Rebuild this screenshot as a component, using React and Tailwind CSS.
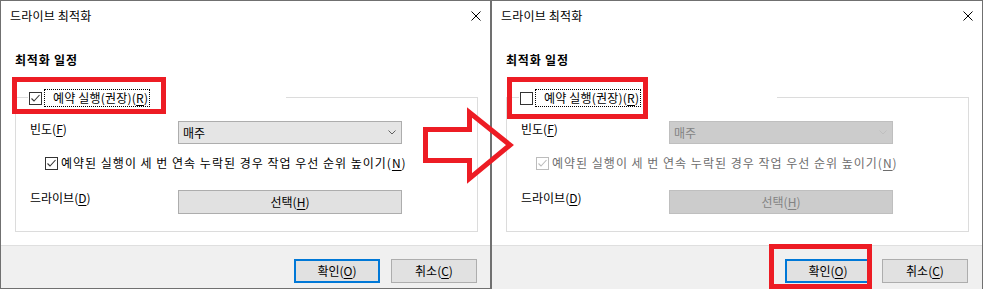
const FONT = "font-['Noto_Sans_CJK_KR','Noto_Sans',sans-serif]"

function Check({ color }) {
  return (
    <svg width="11" height="11" viewBox="0 0 11 11" className="block">
      <polyline points="1.5,5.5 4,8 9.5,2" fill="none" stroke={color} strokeWidth="1.1" />
    </svg>
  )
}

function CheckBox({ checked, disabled }) {
  return (
    <span
      className={
        'w-[13px] h-[13px] shrink-0 flex items-center justify-center bg-white border ' +
        (disabled ? 'border-[#bcbcbc]' : 'border-[#333333]')
      }
    >
      {checked && <Check color={disabled ? '#bcbcbc' : '#333333'} />}
    </span>
  )
}

function Key({ children }) {
  return <u className="underline underline-offset-[2px] decoration-[1px]">{children}</u>
}

function Dialog({ checked, disabled, className }) {
  return (
    <div className={'flex flex-col shrink-0 border-[#707070] overflow-hidden ' + className}>
      {/* title bar */}
      <div className="h-[30px] shrink-0 flex items-center pl-[9px] bg-white">
        <span className="text-[12px] leading-[16px] tracking-[0.2px] text-black">드라이브 최적화</span>
        <svg width="10" height="10" viewBox="0 0 10 10" className="ml-auto mr-[9px]">
          <path d="M0.5 0.5 L9.5 9.5 M9.5 0.5 L0.5 9.5" stroke="#000" strokeWidth="1" />
        </svg>
      </div>

      {/* body */}
      <div className="h-[214px] shrink-0 bg-white pl-[14px] pt-[21px]">
        <p className="text-[12px] leading-[16px] font-bold tracking-[0.8px] text-black">최적화 일정</p>

        <div className="mt-[29px] w-[463px] h-[135px] border border-[#dcdcdc]">
          <div className="-mt-[9px] ml-[12px] w-[258px] h-[18px] bg-white flex items-center pl-[1px]">
            <CheckBox checked={checked} />
            <span className="ml-[2px] h-[18px] flex items-center pl-[8px] pr-[1px] border border-dotted border-black text-[12px] leading-[16px] tracking-[0.2px] text-black">
              예약 실행(권장)(<Key>R</Key>)
            </span>
          </div>

          <div className="mt-[14px] flex items-start pl-[14px]">
            <span className="w-[148px] text-[12px] leading-[16px] text-black">
              빈도(<Key>F</Key>)
            </span>
            <div
              className={
                'w-[224px] h-[23px] flex items-center pl-[4px] pr-[5px] border text-[12px] ' +
                (disabled
                  ? 'bg-[#cccccc] border-[#bfbfbf] text-[#838383]'
                  : 'bg-[#e5e5e5] border-[#adadad] text-black')
              }
            >
              <span>매주</span>
              <svg width="8" height="5" viewBox="0 0 8 5" className="ml-auto">
                <polyline
                  points="0.5,0.5 4,4 7.5,0.5"
                  fill="none"
                  stroke={disabled ? '#bfbfbf' : '#606060'}
                  strokeWidth="1"
                />
              </svg>
            </div>
          </div>

          <div className="mt-[11px] h-[16px] flex items-center pl-[29px]">
            <CheckBox checked disabled={disabled} />
            <span
              className={
                'ml-[3px] text-[12px] leading-[16px] tracking-[1px] ' +
                (disabled ? 'text-[#6d6d6d]' : 'text-black')
              }
            >
              예약된 실행이 세 번 연속 누락된 경우 작업 우선 순위 높이기(<Key>N</Key>)
            </span>
          </div>

          <div className="mt-[19px] flex items-start pl-[14px]">
            <span className="w-[148px] text-[12px] leading-[16px] text-black">
              드라이브(<Key>D</Key>)
            </span>
            <div
              className={
                'w-[224px] h-[24px] flex items-center justify-center border text-[12px] ' +
                (disabled
                  ? 'bg-[#cccccc] border-[#bfbfbf] text-[#838383]'
                  : 'bg-[#e1e1e1] border-[#adadad] text-black')
              }
            >
              선택(<Key>H</Key>)
            </div>
          </div>
        </div>
      </div>

      {/* footer */}
      <div className="flex-1 border-t border-[#dfdfdf] bg-[#f0f0f0] flex items-start pl-[293px] pt-[13px] gap-[11px]">
        <div className="w-[86px] h-[24px] flex items-center justify-center border-2 border-[#0078d7] bg-[#e1e1e1] text-[12px] text-black">
          확인(<Key>O</Key>)
        </div>
        <div className="w-[86px] h-[24px] flex items-center justify-center border border-[#adadad] bg-[#e1e1e1] text-[12px] text-black">
          취소(<Key>C</Key>)
        </div>
      </div>
    </div>
  )
}

export default function App() {
  return (
    <div className={'relative w-[985px] h-[289px] overflow-hidden bg-white flex items-start ' + FONT}>
      <Dialog checked className="w-[491px] h-[289px] border" />
      <Dialog checked={false} disabled className="w-[492px] h-[290px] border-l border-t border-r" />

      {/* annotations */}
      <div className="absolute left-[12px] top-[77px] w-[154px] h-[37px] border-[5px] border-[#ed1c24]" />
      <div className="absolute left-[507px] top-[77px] w-[141px] h-[42px] border-[5px] border-[#ed1c24]" />
      <div className="absolute left-[769px] top-[244px] w-[103px] h-[45px] border-[5px] border-[#ed1c24]" />
      <svg className="absolute left-[400px] top-[90px] pointer-events-none" width="130" height="110" viewBox="0 0 130 110">
        <polygon
          points="25.5,39.5 69.5,39.5 69.5,22.5 110,55 69.5,88.5 69.5,70.5 25.5,70.5"
          fill="none"
          stroke="#ed1c24"
          strokeWidth="5"
          strokeLinejoin="miter"
        />
      </svg>
    </div>
  )
}
